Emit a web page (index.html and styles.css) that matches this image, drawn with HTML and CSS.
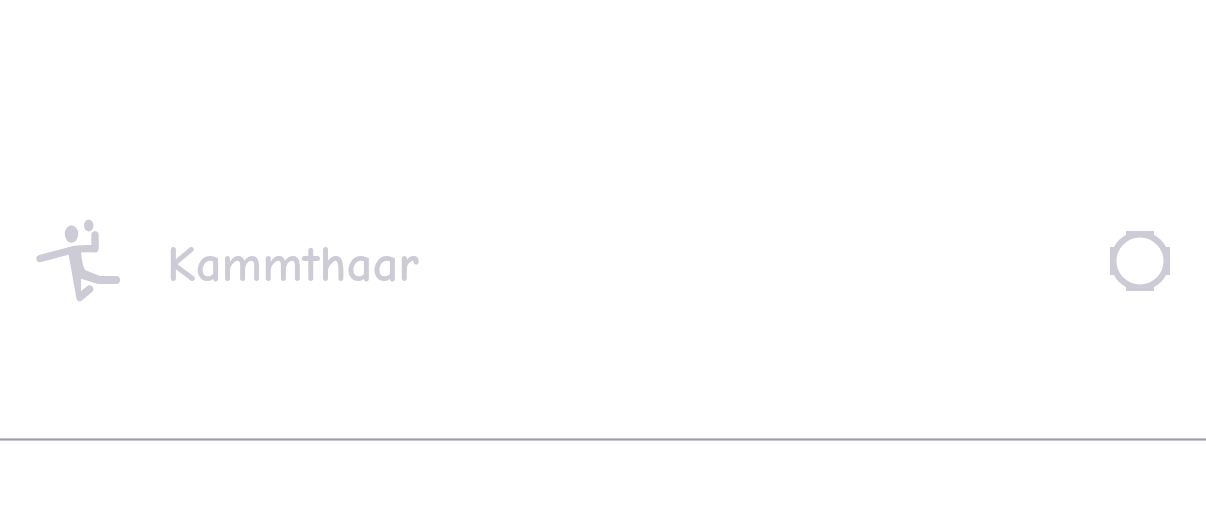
FILE: index.html
```
<!DOCTYPE html>
<html lang="en">
<head>
<meta charset="utf-8">
<title>Kammthaar</title>
<link rel="stylesheet" href="styles.css">
</head>
<body>
<main class="list">
  <div class="row">
    <svg class="figure" viewBox="0 0 84 84" aria-hidden="true">
      <ellipse cx="35.500" cy="15" rx="6.700" ry="8.700"/>
      <ellipse cx="52.700" cy="6.500" rx="4.700" ry="6"/>
      <path class="limb" d="M4 39.500 36 31C42 29 49 29.700 59 29.700V16"/>
      <path d="M32 32H45Q46 46 49 51L64 57H80A4 4 0 0 1 80 65H62L45 59.700V72L52 66.500A4 4 0 0 1 57 72L46 81.500Q42 84 40.500 80Z"/>
    </svg>
    <span class="name">Kammthaar</span>
    <button class="toggle" type="button" aria-label="Select Kammthaar">
      <svg class="ring" viewBox="0 0 60 60" aria-hidden="true">
        <path fill-rule="evenodd" d="M16 0H44V4Q52 8 56 16H60V44H56Q52 52 44 56V60H16V56Q8 52 4 44H0V16H4Q8 8 16 4ZM30 6.500A23.500 23.500 0 1 0 30 53.500A23.500 23.500 0 1 0 30 6.500Z"/>
      </svg>
    </button>
  </div>
  <hr class="divider">
</main>
</body>
</html>
```
FILE: styles.css
```
body {
  margin: 0;
  background: #fff;
  color: #cdccd6;
}
.row {
  display: flex;
  align-items: center;
  padding: 219px 36px 135px;
}
.divider {
  height: 1px;
  margin: 0;
  border: solid #c8c7d2;
  border-width: 1px 0;
  background: #9c9bab;
}
.figure {
  flex: none;
  width: 84px;
  height: 84px;
  fill: currentColor;
}
.limb {
  fill: none;
  stroke: currentColor;
  stroke-width: 7.400;
  stroke-linecap: round;
  stroke-linejoin: round;
}
.name {
  flex: 1;
  margin-left: 47px;
  padding-top: 8px;
  font: 700 51px/60px "Comic Neue", "Comic Sans MS", Lato, sans-serif;
}
.toggle {
  flex: none;
  padding: 0;
  border: 0;
  background: none;
  color: inherit;
}
.ring {
  display: block;
  width: 60px;
  height: 60px;
  fill: currentColor;
}
```
